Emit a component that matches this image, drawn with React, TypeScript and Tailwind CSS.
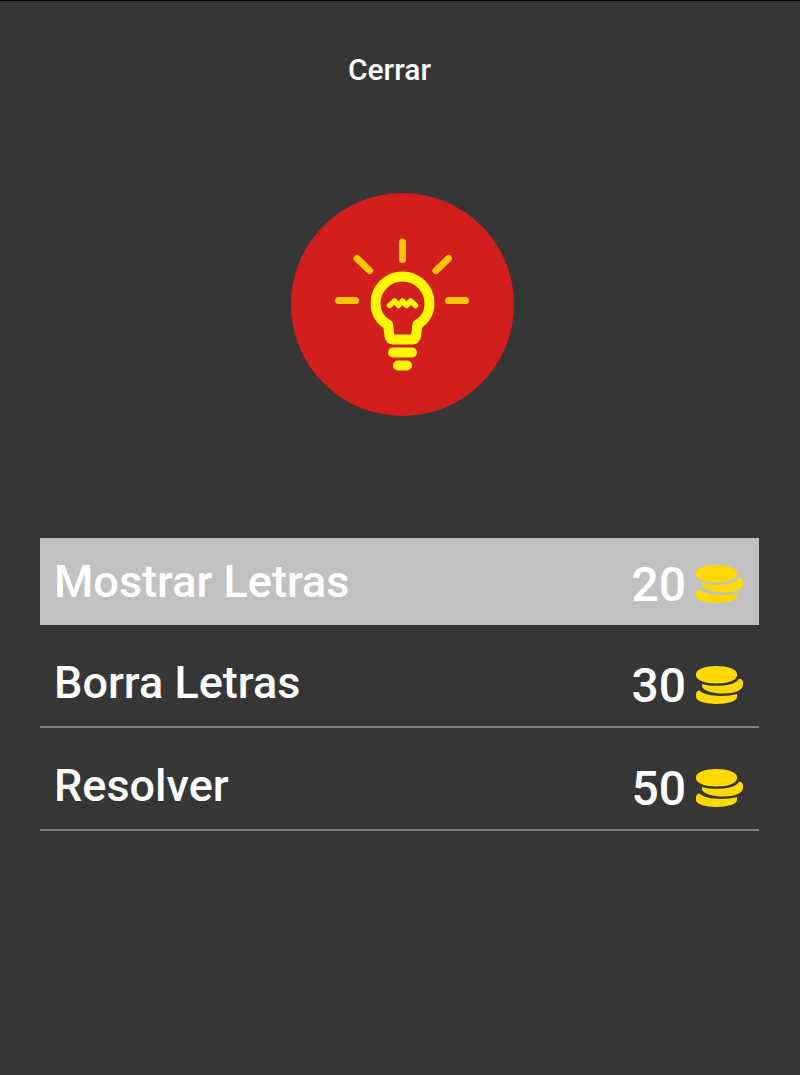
type Hint = { label: string; cost: number; selected?: boolean };

const hints: Hint[] = [
  { label: "Mostrar Letras", cost: 20, selected: true },
  { label: "Borra Letras", cost: 30 },
  { label: "Resolver", cost: 50 },
];

function CoinsIcon() {
  return (
    <svg viewBox="0 0 47 38" className="h-[38px] w-[47px] shrink-0" fill="#ffd900" aria-hidden="true">
      <path d="M0 8C0 3.500 9 0 20.500 0S41 3.500 41 8V9.500C41 14 32 17.500 20.500 17.500S0 14 0 9.500Z" />
      <path d="M6 18C10 19.300 15 19.800 21 19.800C31 19.800 39.500 17.800 42.500 13.500Q43 12.600 44 12.800Q47 13.800 47 16.500V19C47 24 38.500 27.500 27 27.500C17 27.500 8 25 6.200 21Z" />
      <path d="M0 28Q0 25.500 3 24.200C7 28 15 29.900 25 29.900C31 29.900 36.500 29.200 41 28V31C41 35 32 38 20.500 38S0 35 0 31Z" />
    </svg>
  );
}

function BulbBadge() {
  return (
    <svg viewBox="0 0 223 223" className="size-[223px]" fill="none" strokeLinecap="round" strokeLinejoin="round" role="img" aria-label="Pista">
      <circle cx="111.500" cy="111.500" r="111.500" fill="#d21f1d" />
      <path
        stroke="#fcc506"
        strokeWidth="7"
        d="M111.500 49V66.500M66 65.500L78.500 77.500M157.500 65.500L145 77.500M47.500 107.500H64.500M157.500 107.500H174.500"
      />
      <g stroke="#fff800">
        <path
          strokeWidth="10"
          d="M97 131.500C89 127.500 84.500 119.500 84.500 110.500A27 27 0 0 1 138.500 110.500C138.500 119.500 134 127.500 126.500 131.500L125 143Q124.300 146.500 121 146.500H102.500Q99.200 146.500 98.500 143Z"
        />
        <path strokeWidth="5.500" d="M98.500 112.500L103.500 108L107.500 112.500L111.500 108L115.500 112.500L119.700 108L124.500 112.500" />
        <path strokeWidth="10" d="M102 159.500H121M107 172.500H116" />
      </g>
    </svg>
  );
}

function HintRow({ label, cost, selected }: Hint) {
  return (
    <button
      type="button"
      className={
        selected
          ? "flex h-[87px] w-full items-center justify-between bg-[#c1c1c1] pr-4 pl-[14px]"
          : "flex h-[88px] w-full items-center justify-between border-b-2 border-[#728681] pr-4 pl-[14px]"
      }
    >
      <span className="text-[45px] leading-[52px]">{label}</span>
      <span className="flex items-center gap-[10px] pt-1">
        <span className="pt-[2px] text-[48px] leading-[56px]">{cost}</span>
        <CoinsIcon />
      </span>
    </button>
  );
}

export default function App() {
  return (
    <main className="flex min-h-screen flex-col border-t border-black bg-[#363636] pt-[52px] pr-[41px] pl-10 font-['Roboto',sans-serif] font-medium text-white">
      <header className="flex justify-center pr-5">
        <button type="button" className="text-[30px] leading-[34px]">
          Cerrar
        </button>
      </header>
      <div className="flex justify-center pt-[106px] pl-[6px]">
        <BulbBadge />
      </div>
      <ul className="mt-[122px] flex flex-col gap-[15px]">
        {hints.map((hint) => (
          <li key={hint.label}>
            <HintRow {...hint} />
          </li>
        ))}
      </ul>
    </main>
  );
}
